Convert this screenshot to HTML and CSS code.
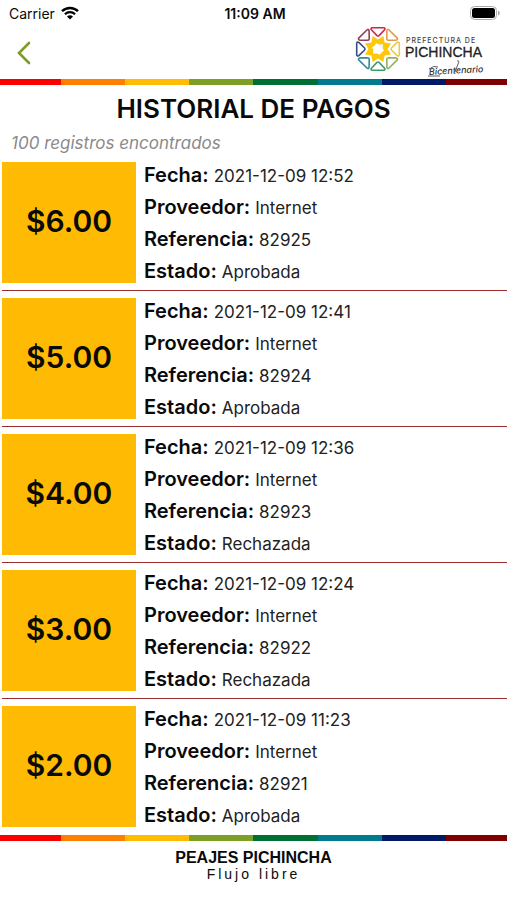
FILE: index.html
```html
<!DOCTYPE html>
<html lang="es">
<head>
  <meta charset="UTF-8">
  <meta name="viewport" content="width=device-width, initial-scale=1">
  <title>Historial de pagos</title>
  <link rel="stylesheet" href="styles.css">
</head>
<body>
  <div class="status-bar">
    <div class="carrier">
      <span>Carrier</span>
      <svg width="18" height="14" viewBox="0 0 18 14">
        <path d="M1 5.2 A11.5 11.5 0 0 1 17 5.2" fill="none" stroke="#000" stroke-width="2.4"/>
        <path d="M3.9 8.2 A7.4 7.4 0 0 1 14.1 8.2" fill="none" stroke="#000" stroke-width="2.2"/>
        <path d="M9 13.6 L6 10.6 A4.3 4.3 0 0 1 12 10.6 Z" fill="#000"/>
      </svg>
    </div>
    <div class="time">11:09 AM</div>
    <div class="battery">
      <svg width="31" height="14" viewBox="0 0 31 14">
        <rect x="0.5" y="0.5" width="26" height="13" rx="4" fill="#fff" stroke="#aaa"/>
        <rect x="2" y="2" width="23" height="10" rx="2.5" fill="#000"/>
        <path d="M28 4.5 A2.6 2.6 0 0 1 28 9.5 Z" fill="#aaa"/>
      </svg>
    </div>
  </div>

  <header class="header">
    <button type="button" class="back" aria-label="Volver">
      <svg width="16" height="24" viewBox="0 0 16 24">
        <path d="M13 2 L3 12 L13 22" fill="none" stroke="#7d9c25" stroke-width="2.6" stroke-linecap="round"/>
      </svg>
    </button>
    <svg class="logo" width="134" height="53" viewBox="0 0 134 53" role="img" aria-label="Prefectura de Pichincha">
      <g transform="translate(24 23)">
        <g fill="none" stroke-width="1.6" stroke-linejoin="round">
          <path d="M-6 -21.3 H6 Q7.6 -20.8 6.6 -19.2 L1 -13.4 Q0 -12.6 -1 -13.4 L-6.6 -19.2 Q-7.6 -20.8 -6 -21.3 Z" stroke="#cf2450"/>
          <path d="M-6 -21.3 H6 Q7.6 -20.8 6.6 -19.2 L1 -13.4 Q0 -12.6 -1 -13.4 L-6.6 -19.2 Q-7.6 -20.8 -6 -21.3 Z" stroke="#e39a4c" transform="rotate(45)"/>
          <path d="M-6 -21.3 H6 Q7.6 -20.8 6.6 -19.2 L1 -13.4 Q0 -12.6 -1 -13.4 L-6.6 -19.2 Q-7.6 -20.8 -6 -21.3 Z" stroke="#e8cb4a" transform="rotate(90)"/>
          <path d="M-6 -21.3 H6 Q7.6 -20.8 6.6 -19.2 L1 -13.4 Q0 -12.6 -1 -13.4 L-6.6 -19.2 Q-7.6 -20.8 -6 -21.3 Z" stroke="#8fb35c" transform="rotate(135)"/>
          <path d="M-6 -21.3 H6 Q7.6 -20.8 6.6 -19.2 L1 -13.4 Q0 -12.6 -1 -13.4 L-6.6 -19.2 Q-7.6 -20.8 -6 -21.3 Z" stroke="#3f9a6b" transform="rotate(180)"/>
          <path d="M-6 -21.3 H6 Q7.6 -20.8 6.6 -19.2 L1 -13.4 Q0 -12.6 -1 -13.4 L-6.6 -19.2 Q-7.6 -20.8 -6 -21.3 Z" stroke="#338b98" transform="rotate(225)"/>
          <path d="M-6 -21.3 H6 Q7.6 -20.8 6.6 -19.2 L1 -13.4 Q0 -12.6 -1 -13.4 L-6.6 -19.2 Q-7.6 -20.8 -6 -21.3 Z" stroke="#344f84" transform="rotate(270)"/>
          <path d="M-6 -21.3 H6 Q7.6 -20.8 6.6 -19.2 L1 -13.4 Q0 -12.6 -1 -13.4 L-6.6 -19.2 Q-7.6 -20.8 -6 -21.3 Z" stroke="#8f3f58" transform="rotate(315)"/>
        </g>
        <path d="M5.4 -13 L6.6 -6.6 L13 -5.4 L9.6 0 L13 5.4 L6.6 6.6 L5.4 13 L0 9.6 L-5.4 13 L-6.6 6.6 L-13 5.4 L-9.6 0 L-13 -5.4 L-6.6 -6.6 L-5.4 -13 L0 -9.6 Z" fill="#fdc70c"/>
        <path d="M-1.8 -5.8 L1 -4.4 L5 -4.8 L4.6 -1 L6 1.8 L3.8 3.2 L1.8 5.8 L-1 4.4 L-5 4.8 L-4.6 1 L-6 -1.8 L-3.8 -3.2 Z" fill="#fff"/>
      </g>
      <text class="logo-small" x="52" y="17">PREFECTURA DE</text>
      <text class="logo-name" x="51" y="31">PICHINCHA</text>
      <text class="logo-script" x="75" y="49" transform="rotate(-3 75 49)">Bicentenario</text>
      <path d="M75 43 Q80 39 84 41 M74 50 L86 50 M103 35 Q106 34 104 38 L101 46" fill="none" stroke="#333" stroke-width="0.8"/>
    </svg>
  </header>

  <div class="stripe">
    <span class="red"></span><span class="orange"></span><span class="yellow"></span><span class="lime"></span>
    <span class="green"></span><span class="teal"></span><span class="navy"></span><span class="maroon"></span>
  </div>

  <main class="content">
    <h1>HISTORIAL DE PAGOS</h1>
    <p class="count">100 registros encontrados</p>

    <ul class="payments">
      <li class="payment">
        <div class="amount">$6.00</div>
        <dl class="details">
          <div><dt>Fecha:</dt> <dd>2021-12-09 12:52</dd></div>
          <div><dt>Proveedor:</dt> <dd>Internet</dd></div>
          <div><dt>Referencia:</dt> <dd>82925</dd></div>
          <div><dt>Estado:</dt> <dd>Aprobada</dd></div>
        </dl>
      </li>
      <li class="payment">
        <div class="amount">$5.00</div>
        <dl class="details">
          <div><dt>Fecha:</dt> <dd>2021-12-09 12:41</dd></div>
          <div><dt>Proveedor:</dt> <dd>Internet</dd></div>
          <div><dt>Referencia:</dt> <dd>82924</dd></div>
          <div><dt>Estado:</dt> <dd>Aprobada</dd></div>
        </dl>
      </li>
      <li class="payment">
        <div class="amount">$4.00</div>
        <dl class="details">
          <div><dt>Fecha:</dt> <dd>2021-12-09 12:36</dd></div>
          <div><dt>Proveedor:</dt> <dd>Internet</dd></div>
          <div><dt>Referencia:</dt> <dd>82923</dd></div>
          <div><dt>Estado:</dt> <dd>Rechazada</dd></div>
        </dl>
      </li>
      <li class="payment">
        <div class="amount">$3.00</div>
        <dl class="details">
          <div><dt>Fecha:</dt> <dd>2021-12-09 12:24</dd></div>
          <div><dt>Proveedor:</dt> <dd>Internet</dd></div>
          <div><dt>Referencia:</dt> <dd>82922</dd></div>
          <div><dt>Estado:</dt> <dd>Rechazada</dd></div>
        </dl>
      </li>
      <li class="payment">
        <div class="amount">$2.00</div>
        <dl class="details">
          <div><dt>Fecha:</dt> <dd>2021-12-09 11:23</dd></div>
          <div><dt>Proveedor:</dt> <dd>Internet</dd></div>
          <div><dt>Referencia:</dt> <dd>82921</dd></div>
          <div><dt>Estado:</dt> <dd>Aprobada</dd></div>
        </dl>
      </li>
    </ul>
  </main>

  <div class="stripe">
    <span class="red"></span><span class="orange"></span><span class="yellow"></span><span class="lime"></span>
    <span class="green"></span><span class="teal"></span><span class="navy"></span><span class="maroon"></span>
  </div>

  <footer class="footer">
    <strong>PEAJES PICHINCHA</strong>
    <span>Flujo libre</span>
  </footer>
</body>
</html>
```

FILE: styles.css
```css
* {
  box-sizing: border-box;
}

body {
  margin: 0;
  height: 100vh;
  display: flex;
  flex-direction: column;
  background-color: #fff;
  color: #0a0a0a;
  font-family: Inter, "Liberation Sans", sans-serif;
}

/* Status bar */
.status-bar {
  display: grid;
  grid-template-columns: 1fr auto 1fr;
  align-items: center;
  height: 26px;
  padding: 0 6px 0 9px;
  font-size: 14px;
}

.carrier {
  display: flex;
  align-items: center;
  gap: 6px;
}

.time {
  font-weight: 600;
}

.battery {
  display: flex;
  justify-content: flex-end;
}

/* Header */
.header {
  display: flex;
  justify-content: space-between;
  align-items: center;
  height: 53px;
  padding: 0 19px 0 16px;
}

.back {
  display: flex;
  padding: 0;
  border: 0;
  background: none;
}

.logo-small {
  font-size: 7px;
  font-weight: 500;
  letter-spacing: 1px;
  fill: #444;
}

.logo-name {
  font-size: 14px;
  font-family: "Liberation Sans", Arial, sans-serif;
  fill: #222;
  stroke: #222;
  stroke-width: 0.3px;
}

.logo-script {
  font-size: 9px;
  font-style: italic;
  font-weight: 500;
  fill: #333;
}

/* Colour stripe */
.stripe {
  display: grid;
  grid-template-columns: 61fr repeat(6, 64fr) 61fr;
  flex: none;
  height: 6px;
}

.red { background-color: #fb0000; }
.orange { background-color: #ff8000; }
.yellow { background-color: #ffbc03; }
.lime { background-color: #7d9f25; }
.green { background-color: #006f33; }
.teal { background-color: #007a8d; }
.navy { background-color: #001a66; }
.maroon { background-color: #7f0000; }

/* Payments */
.content {
  flex: 1;
  min-height: 0;
  overflow: hidden;
}

h1 {
  margin: 8px 0;
  font-size: 26px;
  line-height: 32px;
  font-weight: 600;
  text-align: center;
}

.count {
  margin: 0 11px 6px;
  font-size: 17px;
  line-height: 20px;
  font-style: italic;
  color: #8a8a8a;
}

.payments {
  margin: 0;
  padding: 0 0 0 2px;
  list-style: none;
}

.payment {
  display: flex;
  gap: 8px;
  margin-bottom: 4px;
  padding-bottom: 3px;
  border-bottom: 1px solid #9b2c2c;
}

.payment:last-child {
  border-bottom: 0;
}

.amount {
  display: flex;
  align-items: center;
  justify-content: center;
  width: 134px;
  margin: 3px 0 4px;
  padding-bottom: 4px;
  background-color: #ffba03;
  font-size: 30px;
  font-weight: 600;
}

.details {
  margin: 0;
}

.details div {
  display: flex;
  align-items: baseline;
  gap: 5px;
}

.details dt {
  font-size: 20px;
  line-height: 32px;
  font-weight: 600;
}

.details dd {
  margin: 0;
  font-size: 17px;
  line-height: 20px;
  color: #222;
}

/* Footer */
.footer {
  display: flex;
  flex-direction: column;
  align-items: center;
  height: 59px;
  padding-top: 9px;
  font-family: "Liberation Sans", Arial, sans-serif;
  font-size: 16px;
  line-height: 16px;
}

.footer span {
  font-size: 14px;
  letter-spacing: 3px;
}
```
